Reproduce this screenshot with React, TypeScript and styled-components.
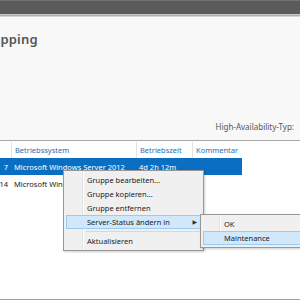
import styled, { createGlobalStyle } from 'styled-components'

const GlobalStyle = createGlobalStyle`
  html, body {
    margin: 0;
    padding: 0;
    background: #ffffff;
  }
  body {
    font-family: "Noto Sans", "DejaVu Sans", sans-serif;
  }
`

const Screen = styled.div`
  position: relative;
  width: 300px;
  height: 300px;
  overflow: hidden;
  display: flex;
  flex-direction: column;
  background: #ffffff;
`

const TitleBar = styled.div`
  height: 15px;
  background: #5b5b5b;
  border-top: 1px solid #737373;
  box-sizing: border-box;
  border-bottom: 1px solid #c8c8c8;
  flex-shrink: 0;
`

const EdgeLine = styled.div`
  height: 2px;
  background: linear-gradient(#9a9a9a, #e6e6e6);
  flex-shrink: 0;
`

const Header = styled.div`
  height: 124px;
  background: #f8f8f8;
  border-bottom: 1px solid #a9a9a9;
  display: flex;
  flex-direction: column;
  justify-content: space-between;
  padding: 13px 6px 8px 0;
  box-sizing: border-box;
  flex-shrink: 0;
`

const Title = styled.div`
  font-size: 13px;
  font-weight: 600;
  color: #555555;
  margin-left: -66px;
  letter-spacing: 0.2px;
  white-space: nowrap;
`

const HaLabel = styled.div`
  align-self: flex-end;
  font-size: 8px;
  color: #555555;
`

const Table = styled.div`
  display: grid;
  grid-template-columns: 11px 125px 56px 50px;
  grid-auto-rows: 17px;
  width: 242px;
  font-size: 7.5px;
`

const HeadCell = styled.div<{ $first?: boolean }>`
  color: #2a6db2;
  display: flex;
  align-items: center;
  padding-left: 3px;
  border-left: ${(p) => (p.$first ? 'none' : '1px solid #e3e3e3')};
  margin-top: 1px;
  height: 16px;
  box-sizing: border-box;
`

const Cell = styled.div<{ $selected?: boolean; $num?: boolean }>`
  display: flex;
  align-items: center;
  justify-content: ${(p) => (p.$num ? 'flex-end' : 'flex-start')};
  padding: ${(p) => (p.$num ? '0 3px 0 0' : '0 0 0 3px')};
  background: ${(p) => (p.$selected ? '#0a6fc2' : 'transparent')};
  color: ${(p) => (p.$selected ? '#ffffff' : '#202020')};
  white-space: nowrap;
  overflow: hidden;
`

const BottomLine = styled.div`
  margin-top: auto;
  height: 1px;
  background: #a0a0a0;
`

const Menu = styled.div<{ $left: number; $top: number; $width: number; $gutter: number }>`
  position: absolute;
  left: ${(p) => p.$left}px;
  top: ${(p) => p.$top}px;
  width: ${(p) => p.$width}px;
  background: #f0f0f0;
  border: 1px solid #979797;
  box-shadow: 1px 1px 2px rgba(0, 0, 0, 0.2);
  padding: 2px;
  box-sizing: border-box;
  font-size: 7.5px;
  color: #1a1a1a;
  background-image: linear-gradient(
    to right,
    transparent 0,
    transparent ${(p) => p.$gutter}px,
    #e2e2e2 ${(p) => p.$gutter}px,
    #e2e2e2 ${(p) => p.$gutter + 1}px,
    #ffffff ${(p) => p.$gutter + 1}px,
    #ffffff ${(p) => p.$gutter + 2}px,
    transparent ${(p) => p.$gutter + 2}px
  );
`

const Item = styled.div<{ $active?: boolean; $pad: number }>`
  height: 14px;
  display: flex;
  align-items: center;
  justify-content: space-between;
  padding-left: ${(p) => p.$pad}px;
  padding-right: 3px;
  box-sizing: border-box;
  border: 1px solid ${(p) => (p.$active ? '#99ccf5' : 'transparent')};
  background: ${(p) => (p.$active ? '#d1e8fb' : 'transparent')};
  white-space: nowrap;
`

const Separator = styled.div<{ $pad: number }>`
  height: 1px;
  margin: 2px 0 2px ${(p) => p.$pad}px;
  background: #d7d7d7;
`

const Arrow = styled.span`
  font-size: 6px;
  color: #333;
`

export default function App() {
  return (
    <Screen>
      <GlobalStyle />
      <TitleBar />
      <EdgeLine />
      <Header>
        <Title>Server-Mapping</Title>
        <HaLabel>High-Availability-Typ:</HaLabel>
      </Header>
      <Table>
        <HeadCell $first />
        <HeadCell>Betriebssystem</HeadCell>
        <HeadCell>Betriebszeit</HeadCell>
        <HeadCell>Kommentar</HeadCell>

        <Cell $selected $num>7</Cell>
        <Cell $selected>Microsoft Windows Server 2012</Cell>
        <Cell $selected>4d 2h 12m</Cell>
        <Cell $selected />

        <Cell $num>14</Cell>
        <Cell>Microsoft Windows</Cell>
        <Cell />
        <Cell />
      </Table>
      <BottomLine />

      <Menu $left={63} $top={170} $width={141} $gutter={18}>
        <Item $pad={20}>Gruppe bearbeiten...</Item>
        <Item $pad={20}>Gruppe kopieren...</Item>
        <Item $pad={20}>Gruppe entfernen</Item>
        <Item $pad={20} $active>
          Server-Status ändern in <Arrow>▶</Arrow>
        </Item>
        <Separator $pad={20} />
        <Item $pad={20}>Aktualisieren</Item>
      </Menu>

      <Menu $left={200} $top={214} $width={110} $gutter={18}>
        <Item $pad={20}>OK</Item>
        <Item $pad={20} $active>Maintenance</Item>
      </Menu>
    </Screen>
  )
}
